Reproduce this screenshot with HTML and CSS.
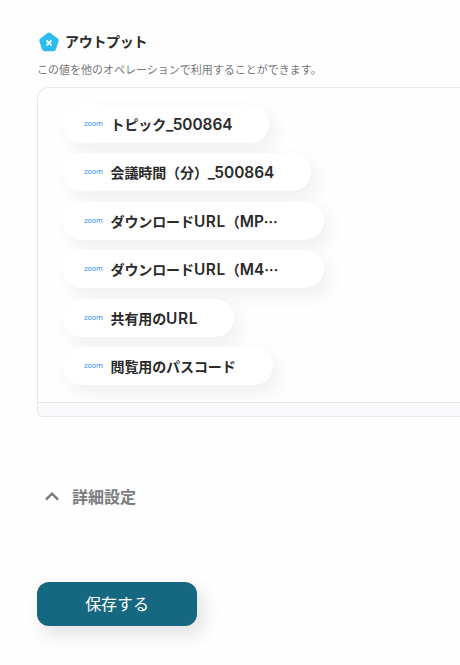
FILE: index.html
```html
<!DOCTYPE html>
<html lang="ja">
<head>
<meta charset="utf-8">
<title>アウトプット</title>
<link rel="stylesheet" href="styles.css">
</head>
<body>
<main class="page">
  <header class="head">
    <svg class="badge" width="22" height="20" viewBox="0 0 22 20"><path d="M9.6 1.1a2.4 2.4 0 0 1 2.8 0l7.3 5.4a2.4 2.4 0 0 1 .9 2.7l-2.7 8.4a2.4 2.4 0 0 1-2.3 1.7H6.4a2.4 2.4 0 0 1-2.3-1.7L1.4 9.2a2.4 2.4 0 0 1 .9-2.7Z" fill="#2cbcee"/><path d="M9 9l4 3.8M13 9l-4 3.8" stroke="#fff" stroke-width="1.8" stroke-linecap="round"/></svg>
    <h2 class="title">アウトプット</h2>
  </header>
  <p class="desc">この値を他のオペレーションで利用することができます。</p>
  <section class="box">
    <div class="list">
      <div class="pill w206"><span class="zoom">zoom</span><span class="label">トピック<span class="lat">_500864</span></span></div>
      <div class="pill w248"><span class="zoom">zoom</span><span class="label">会議時間（分）<span class="lat">_500864</span></span></div>
      <div class="pill w261"><span class="zoom">zoom</span><span class="label">ダウンロード<span class="lat url">URL</span>（<span class="lat">MP</span><span class="dots">…</span></span></div>
      <div class="pill w261"><span class="zoom">zoom</span><span class="label">ダウンロード<span class="lat url">URL</span>（<span class="lat">M4</span><span class="dots">…</span></span></div>
      <div class="pill w171"><span class="zoom">zoom</span><span class="label">共有用の<span class="lat url">URL</span></span></div>
      <div class="pill w210"><span class="zoom">zoom</span><span class="label">閲覧用のパスコード</span></div>
    </div>
    <div class="foot"></div>
  </section>
  <div class="details">
    <svg class="chev" width="16" height="10" viewBox="0 0 16 10"><path d="M2 8.6 8 2.6l6 6" fill="none" stroke="#777" stroke-width="2.2"/></svg>
    <span class="details-label">詳細設定</span>
  </div>
  <button class="save"><span class="save-text">保存する</span></button>
</main>
</body>
</html>
```
FILE: styles.css
```css
* { box-sizing: border-box; }
html, body { margin: 0; height: 100%; background: #fefefe; overflow: hidden; }
body { font-family: "Inter", "Noto Sans CJK JP", sans-serif; color: #222; }
.page { padding: 32px 0 0 37px; width: 460px; overflow: hidden; height: 665px; }
.head { display: flex; align-items: center; height: 20px; gap: 5px; margin-left: 1px; }
.badge { flex: none; }
.title { margin: 0; font-size: 14px; font-weight: 700; line-height: 20px; color: #2a2a2a; letter-spacing: -.3px; }
.desc { margin: 10px 0 0; font-size: 11px; line-height: 16px; color: #777; height: 16px; }
.box { margin-top: 9px; width: 423px; height: 330px; border: 1px solid #e6e6ea; border-right: 0; border-radius: 12px 0 0 6px; display: flex; flex-direction: column; justify-content: space-between; }
.list { padding: 17px 0 0 25px; display: flex; flex-direction: column; gap: 10.4px; }
.pill { display: flex; align-items: center; height: 38px; border-radius: 19px; background: #fff; padding-left: 21px; box-shadow: 6px 8px 18px rgba(60, 60, 90, .07); }
.w206 { width: 206px; }
.w248 { width: 248px; }
.w261 { width: 261px; }
.w171 { width: 171px; }
.w210 { width: 210px; }
.zoom { width: 26.5px; flex: none; font-family: "DejaVu Sans", sans-serif; font-size: 7px; line-height: 10px; color: #2d8cff; letter-spacing: -.1px; }
.label { font-size: 14px; font-weight: 600; color: #2a2a2a; white-space: nowrap; letter-spacing: -.1px; }
.lat { font-size: 15.4px; letter-spacing: 0; }
.url { letter-spacing: .6px; }
.dots { font-family: "Noto Sans CJK JP", sans-serif; }
.foot { height: 14px; background: #faf9fb; border-top: 1px solid #e6e6ea; border-radius: 0 0 0 6px; }
.details { margin: 68px 0 0 7px; display: flex; align-items: center; gap: 12px; height: 22px; }
.chev { flex: none; }
.details-label { font-size: 16px; font-weight: 700; color: #7b7b80; }
.save { display: block; margin-top: 75px; width: 160px; height: 44px; padding: 0 0 2px; border: 0; border-radius: 12px; background: #156880; color: #fff; font: 400 16px "Inter", "Noto Sans CJK JP", sans-serif; box-shadow: 6px 8px 18px rgba(60, 60, 90, .15); }
.save-text { letter-spacing: -.1px; }
```
